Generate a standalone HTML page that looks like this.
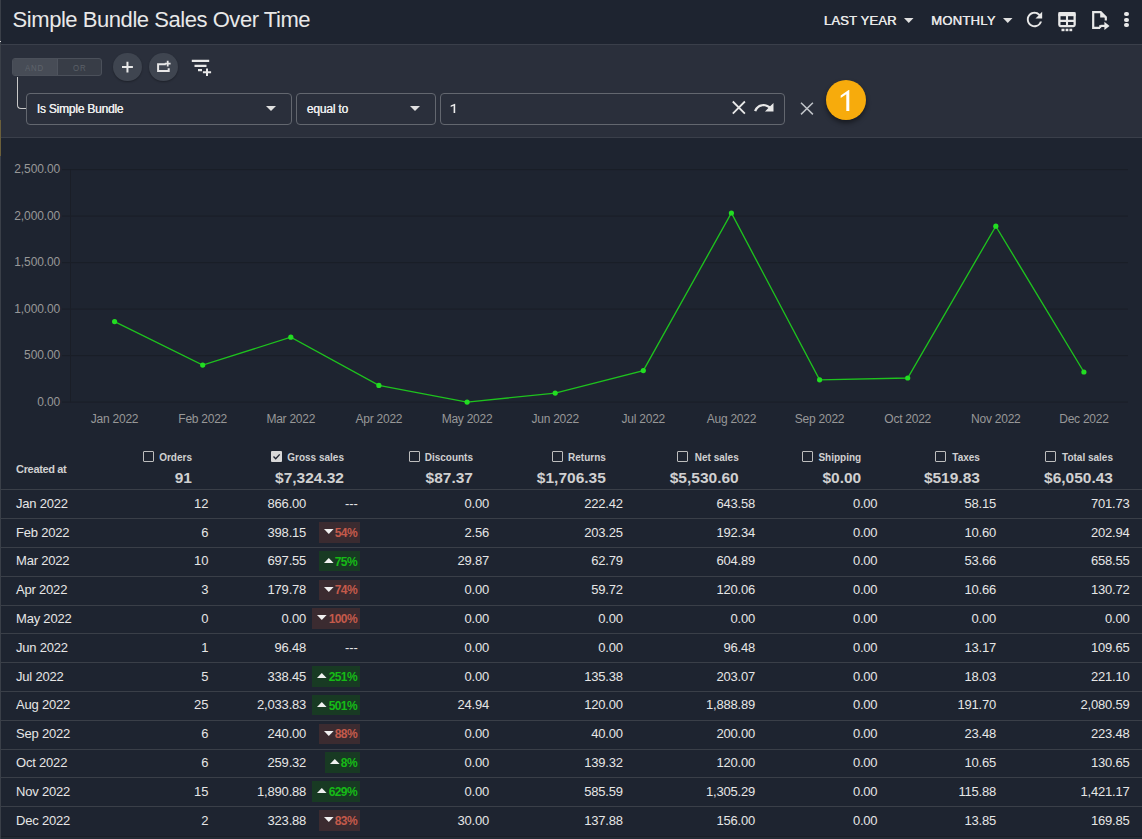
<!DOCTYPE html>
<html><head><meta charset="utf-8"><style>
html,body{margin:0;padding:0;width:1142px;height:839px;overflow:hidden;background:#1e2430}
body{position:relative;font-family:"Liberation Sans",sans-serif}
.t{position:absolute;white-space:nowrap}
</style></head><body>
<div style="position:absolute;left:0px;top:0px;width:1142px;height:44px;background:#1e2430"></div>
<div style="position:absolute;left:0px;top:44px;width:1142px;height:1px;background:#3a3f4a"></div>
<div style="position:absolute;left:0px;top:45px;width:1142px;height:92px;background:#2a2f3b"></div>
<div style="position:absolute;left:0px;top:137px;width:1142px;height:1px;background:#3a3f4a"></div>
<div style="position:absolute;left:0px;top:138px;width:1142px;height:701px;background:#1e2430"></div>
<div style="position:absolute;left:0px;top:0px;width:1px;height:839px;background:#3a3f48"></div>
<div style="position:absolute;left:0px;top:120px;width:1px;height:36px;background:#6b5f3a"></div>
<div style="position:absolute;left:0px;top:41px;width:1px;height:1px;background:#e0e0e0"></div>
<div class="t" style="top:5.50px;font-size:22px;line-height:28px;font-weight:400;color:#e8e8e8;letter-spacing:-0.45px;left:12.60px;">Simple Bundle Sales Over Time</div>
<div class="t" style="top:12.20px;font-size:13px;line-height:17px;font-weight:400;color:#e8e8e8;letter-spacing:0.2px;left:823.80px;text-shadow:0.4px 0 0 #e8e8e8;">LAST YEAR</div>
<div class="t" style="top:12.20px;font-size:13px;line-height:17px;font-weight:400;color:#e8e8e8;letter-spacing:0.3px;left:931.00px;text-shadow:0.4px 0 0 #e8e8e8;">MONTHLY</div>
<svg style="position:absolute;left:904px;top:18px" width="9.5" height="5" viewBox="0 0 9.5 5"><path d="M0 0H9.5L4.75 5Z" fill="#e0e0e0"/></svg>
<svg style="position:absolute;left:1003px;top:18px" width="9.5" height="5" viewBox="0 0 9.5 5"><path d="M0 0H9.5L4.75 5Z" fill="#e0e0e0"/></svg>
<svg style="position:absolute;left:1023px;top:8px" width="23" height="23" viewBox="0 0 24 24"><path fill="#e8e8e8" d="M17.65 6.35A7.958 7.958 0 0 0 12 4c-4.42 0-7.99 3.58-7.99 8s3.57 8 7.99 8c3.73 0 6.84-2.55 7.73-6h-2.08A5.99 5.99 0 0 1 12 18c-3.31 0-6-2.69-6-6s2.69-6 6-6c1.66 0 3.14.69 4.22 1.78L13 11h7V4l-2.35 2.35z"/></svg>
<svg style="position:absolute;left:0;top:0" width="1142" height="44"><rect x="1059.35" y="13.05" width="15.3" height="13" rx="1.2" fill="none" stroke="#e8e8e8" stroke-width="2.3"/><rect x="1058.5" y="12.2" width="17" height="4" fill="#e8e8e8"/><path d="M1067 16v9M1059 20.85h16" stroke="#e8e8e8" stroke-width="2.1"/><rect x="1061.5" y="28.7" width="3" height="2.5" fill="#e8e8e8"/><rect x="1065.6" y="28.7" width="2.8" height="2.5" fill="#e8e8e8"/><rect x="1069.4" y="28.7" width="2.8" height="2.5" fill="#e8e8e8"/><path d="M1100 27.9H1093.2V12.1H1100.7L1105.8 17.2V20.6" fill="none" stroke="#e8e8e8" stroke-width="2.2" stroke-linejoin="miter"/><path d="M1100.2 25.2V28.2" stroke="#e8e8e8" stroke-width="2"/><path d="M1100.2 12.6V17.5H1105.3Z" fill="#e8e8e8"/><path d="M1100.5 25.9H1105.5" stroke="#e8e8e8" stroke-width="2.2"/><path d="M1104.4 21.7L1109.5 25.9 1104.4 30.1Z" fill="#e8e8e8"/></svg>
<div style="position:absolute;left:1124.4px;top:12.0px;width:4.2px;height:4.2px;border-radius:50%;background:#e8e8e8"></div>
<div style="position:absolute;left:1124.4px;top:17.599999999999998px;width:4.2px;height:4.2px;border-radius:50%;background:#e8e8e8"></div>
<div style="position:absolute;left:1124.4px;top:23.2px;width:4.2px;height:4.2px;border-radius:50%;background:#e8e8e8"></div>
<div style="position:absolute;left:12px;top:58px;width:88px;height:16px;border:1px solid #4b505a;border-radius:3px;background:#383d47;overflow:hidden"><div style="position:absolute;left:0;top:0;width:43.6px;height:16px;background:#474c56;border-right:1px solid #4f545e"></div></div>
<div class="t" style="top:60.50px;font-size:9.8px;line-height:13px;font-weight:400;color:#5e636b;letter-spacing:1.0px;left:25.30px;transform:scaleX(0.8);transform-origin:0 0;">AND</div>
<div class="t" style="top:60.50px;font-size:9.8px;line-height:13px;font-weight:400;color:#5b6068;letter-spacing:1.0px;left:73.40px;transform:scaleX(0.8);transform-origin:0 0;">OR</div>
<div style="position:absolute;left:17px;top:77px;width:9px;height:31px;border-left:1px solid #c8c8c8;border-bottom:1px solid #c8c8c8;border-bottom-left-radius:4px"></div>
<div style="position:absolute;left:113.1px;top:52.7px;width:28.8px;height:28.8px;border-radius:50%;background:#3f4550;box-shadow:0 1px 2px rgba(0,0,0,.3)"></div>
<div style="position:absolute;left:149.0px;top:52.7px;width:28.8px;height:28.8px;border-radius:50%;background:#3f4550;box-shadow:0 1px 2px rgba(0,0,0,.3)"></div>
<svg style="position:absolute;left:0;top:44px" width="230" height="40" viewBox="0 44 230 40"><path d="M122 67.1H132.9M127.45 61.8V72.4" stroke="#e8e8e8" stroke-width="2"/><path d="M165.8 64.2H158.1V71H168.7V68.3" fill="none" stroke="#e8e8e8" stroke-width="2"/><path d="M164.8 63.6H170.6M167.7 60.8V66.4" stroke="#e8e8e8" stroke-width="1.8"/><path d="M191.8 60.9H209.2M194.5 65.8H206.5M198 70.1H202" stroke="#e8e8e8" stroke-width="2.2"/><path d="M202.9 72.25H211.1M207 68.5V76" stroke="#e8e8e8" stroke-width="2"/></svg>
<div style="position:absolute;left:26px;top:93px;width:264px;height:30px;border:1px solid #63676f;border-radius:4px"></div>
<div style="position:absolute;left:296px;top:93px;width:138px;height:30px;border:1px solid #63676f;border-radius:4px"></div>
<div style="position:absolute;left:440px;top:93px;width:343px;height:30px;border:1px solid #63676f;border-radius:4px"></div>
<div class="t" style="top:101.50px;font-size:12px;line-height:15px;font-weight:400;color:#ececec;letter-spacing:-0.22px;left:36.80px;text-shadow:0.2px 0 0 #ececec;">Is Simple Bundle</div>
<svg style="position:absolute;left:266px;top:106px" width="10" height="5" viewBox="0 0 10 5"><path d="M0 0H10L5.0 5Z" fill="#e0e0e0"/></svg>
<div class="t" style="top:102.00px;font-size:12px;line-height:15px;font-weight:400;color:#ececec;letter-spacing:-0.2px;left:306.80px;text-shadow:0.2px 0 0 #ececec;">equal to</div>
<svg style="position:absolute;left:410px;top:106px" width="10" height="5" viewBox="0 0 10 5"><path d="M0 0H10L5.0 5Z" fill="#e0e0e0"/></svg>
<svg style="position:absolute;left:440px;top:98px" width="30" height="20" viewBox="440 98 30 20"><path d="M455.2 103.8V112.9H453.6V105.7L450.7 106.9V105.5L454.9 103.8Z" fill="#ececec"/></svg>
<svg style="position:absolute;left:700px;top:90px" width="130" height="30" viewBox="700 90 130 30"><path d="M732.8 101.5L744.9 113.6M744.9 101.5L732.8 113.6" stroke="#e8e8e8" stroke-width="1.8"/><path transform="translate(752.6 96.3) scale(0.95)" fill="#e8e8e8" d="M18.4 10.6C16.55 8.99 14.15 8 11.5 8c-4.65 0-8.58 3.03-9.96 7.22L3.9 16c1.05-3.19 4.05-5.5 7.6-5.5 1.95 0 3.73.72 5.12 1.88L13 16h9V7l-3.6 3.6z"/><path d="M801 102.8L812.9 114.4M812.9 102.8L801 114.4" stroke="#bfc3c8" stroke-width="1.5"/></svg>
<div style="position:absolute;left:826px;top:79.8px;width:40px;height:40px;border-radius:50%;background:#f7ab0c;box-shadow:0 3px 5px rgba(0,0,0,.45)"></div>
<svg style="position:absolute;left:820px;top:80px" width="50" height="40" viewBox="820 80 50 40"><path d="M849.3 89.9V111H846.3V94.2L840.7 98.1V95.5L848.6 89.9Z" fill="#ffffff"/></svg>
<svg style="position:absolute;left:0;top:0" width="1142" height="839"><line x1="62" y1="402.1" x2="1128" y2="402.1" stroke="#1a1e27" stroke-width="1"/><line x1="62" y1="355.6" x2="1128" y2="355.6" stroke="#1a1e27" stroke-width="1"/><line x1="62" y1="309.1" x2="1128" y2="309.1" stroke="#1a1e27" stroke-width="1"/><line x1="62" y1="262.6" x2="1128" y2="262.6" stroke="#1a1e27" stroke-width="1"/><line x1="62" y1="216.1" x2="1128" y2="216.1" stroke="#1a1e27" stroke-width="1"/><line x1="62" y1="169.6" x2="1128" y2="169.6" stroke="#1a1e27" stroke-width="1"/><line x1="70.5" y1="169.6" x2="70.5" y2="402.1" stroke="#1a1e27" stroke-width="1"/><polyline fill="none" stroke="#1ec21e" stroke-width="1.35" points="114.6,321.6 202.7,365.1 290.8,337.2 378.9,385.4 467.1,402.1 555.2,393.1 643.3,370.6 731.4,213.0 819.6,379.8 907.7,378.0 995.8,226.2 1083.9,372.0"/><circle cx="114.6" cy="321.6" r="2.6" fill="#22dd22"/><circle cx="202.7" cy="365.1" r="2.6" fill="#22dd22"/><circle cx="290.8" cy="337.2" r="2.6" fill="#22dd22"/><circle cx="378.9" cy="385.4" r="2.6" fill="#22dd22"/><circle cx="467.1" cy="402.1" r="2.6" fill="#22dd22"/><circle cx="555.2" cy="393.1" r="2.6" fill="#22dd22"/><circle cx="643.3" cy="370.6" r="2.6" fill="#22dd22"/><circle cx="731.4" cy="213.0" r="2.6" fill="#22dd22"/><circle cx="819.6" cy="379.8" r="2.6" fill="#22dd22"/><circle cx="907.7" cy="378.0" r="2.6" fill="#22dd22"/><circle cx="995.8" cy="226.2" r="2.6" fill="#22dd22"/><circle cx="1083.9" cy="372.0" r="2.6" fill="#22dd22"/></svg>
<div class="t" style="top:394.80px;font-size:12px;line-height:15px;font-weight:400;color:#989898;letter-spacing:-0.1px;right:1081.80px;">0.00</div>
<div class="t" style="top:348.30px;font-size:12px;line-height:15px;font-weight:400;color:#989898;letter-spacing:-0.1px;right:1081.80px;">500.00</div>
<div class="t" style="top:301.80px;font-size:12px;line-height:15px;font-weight:400;color:#989898;letter-spacing:-0.1px;right:1081.80px;">1,000.00</div>
<div class="t" style="top:255.30px;font-size:12px;line-height:15px;font-weight:400;color:#989898;letter-spacing:-0.1px;right:1081.80px;">1,500.00</div>
<div class="t" style="top:208.80px;font-size:12px;line-height:15px;font-weight:400;color:#989898;letter-spacing:-0.1px;right:1081.80px;">2,000.00</div>
<div class="t" style="top:162.30px;font-size:12px;line-height:15px;font-weight:400;color:#989898;letter-spacing:-0.1px;right:1081.80px;">2,500.00</div>
<div class="t" style="top:411.50px;font-size:12px;line-height:15px;font-weight:400;color:#989898;letter-spacing:-0.25px;left:114.56px;transform:translateX(-50%);">Jan 2022</div>
<div class="t" style="top:411.50px;font-size:12px;line-height:15px;font-weight:400;color:#989898;letter-spacing:-0.25px;left:202.69px;transform:translateX(-50%);">Feb 2022</div>
<div class="t" style="top:411.50px;font-size:12px;line-height:15px;font-weight:400;color:#989898;letter-spacing:-0.25px;left:290.81px;transform:translateX(-50%);">Mar 2022</div>
<div class="t" style="top:411.50px;font-size:12px;line-height:15px;font-weight:400;color:#989898;letter-spacing:-0.25px;left:378.94px;transform:translateX(-50%);">Apr 2022</div>
<div class="t" style="top:411.50px;font-size:12px;line-height:15px;font-weight:400;color:#989898;letter-spacing:-0.25px;left:467.06px;transform:translateX(-50%);">May 2022</div>
<div class="t" style="top:411.50px;font-size:12px;line-height:15px;font-weight:400;color:#989898;letter-spacing:-0.25px;left:555.19px;transform:translateX(-50%);">Jun 2022</div>
<div class="t" style="top:411.50px;font-size:12px;line-height:15px;font-weight:400;color:#989898;letter-spacing:-0.25px;left:643.31px;transform:translateX(-50%);">Jul 2022</div>
<div class="t" style="top:411.50px;font-size:12px;line-height:15px;font-weight:400;color:#989898;letter-spacing:-0.25px;left:731.44px;transform:translateX(-50%);">Aug 2022</div>
<div class="t" style="top:411.50px;font-size:12px;line-height:15px;font-weight:400;color:#989898;letter-spacing:-0.25px;left:819.56px;transform:translateX(-50%);">Sep 2022</div>
<div class="t" style="top:411.50px;font-size:12px;line-height:15px;font-weight:400;color:#989898;letter-spacing:-0.25px;left:907.69px;transform:translateX(-50%);">Oct 2022</div>
<div class="t" style="top:411.50px;font-size:12px;line-height:15px;font-weight:400;color:#989898;letter-spacing:-0.25px;left:995.81px;transform:translateX(-50%);">Nov 2022</div>
<div class="t" style="top:411.50px;font-size:12px;line-height:15px;font-weight:400;color:#989898;letter-spacing:-0.25px;left:1083.94px;transform:translateX(-50%);">Dec 2022</div>
<div class="t" style="top:461.90px;font-size:11px;line-height:14px;font-weight:700;color:#d0d0d0;letter-spacing:-0.35px;left:16.10px;">Created at</div>
<div class="t" style="top:451.00px;font-size:10px;line-height:13px;font-weight:700;color:#d0d0d0;right:950.00px;">Orders</div>
<div class="t" style="top:467.50px;font-size:15.5px;line-height:20px;font-weight:700;color:#d0d0d0;right:950.00px;">91</div>
<div class="t" style="top:451.00px;font-size:10px;line-height:13px;font-weight:700;color:#d0d0d0;right:798.00px;">Gross sales</div>
<div class="t" style="top:467.50px;font-size:15.5px;line-height:20px;font-weight:700;color:#d0d0d0;right:798.00px;">$7,324.32</div>
<div class="t" style="top:451.00px;font-size:10px;line-height:13px;font-weight:700;color:#d0d0d0;right:669.00px;">Discounts</div>
<div class="t" style="top:467.50px;font-size:15.5px;line-height:20px;font-weight:700;color:#d0d0d0;right:669.00px;">$87.37</div>
<div class="t" style="top:451.00px;font-size:10px;line-height:13px;font-weight:700;color:#d0d0d0;right:536.20px;">Returns</div>
<div class="t" style="top:467.50px;font-size:15.5px;line-height:20px;font-weight:700;color:#d0d0d0;right:536.20px;">$1,706.35</div>
<div class="t" style="top:451.00px;font-size:10px;line-height:13px;font-weight:700;color:#d0d0d0;right:403.30px;">Net sales</div>
<div class="t" style="top:467.50px;font-size:15.5px;line-height:20px;font-weight:700;color:#d0d0d0;right:403.30px;">$5,530.60</div>
<div class="t" style="top:451.00px;font-size:10px;line-height:13px;font-weight:700;color:#d0d0d0;right:280.80px;">Shipping</div>
<div class="t" style="top:467.50px;font-size:15.5px;line-height:20px;font-weight:700;color:#d0d0d0;right:280.80px;">$0.00</div>
<div class="t" style="top:451.00px;font-size:10px;line-height:13px;font-weight:700;color:#d0d0d0;right:162.10px;">Taxes</div>
<div class="t" style="top:467.50px;font-size:15.5px;line-height:20px;font-weight:700;color:#d0d0d0;right:162.10px;">$519.83</div>
<div class="t" style="top:451.00px;font-size:10px;line-height:13px;font-weight:700;color:#d0d0d0;right:29.00px;">Total sales</div>
<div class="t" style="top:467.50px;font-size:15.5px;line-height:20px;font-weight:700;color:#d0d0d0;right:29.00px;">$6,050.43</div>
<div style="position:absolute;left:143.2px;top:450.9px;width:9px;height:9px;border:1px solid #bdbdbd;border-radius:1px"></div>
<div style="position:absolute;left:270.8px;top:450.9px;width:11px;height:11px;background:#d8d8d8;border-radius:1px"></div>
<svg style="position:absolute;left:271.8px;top:451.9px" width="9" height="9" viewBox="0 0 9 9"><path d="M1.5 4.6l2.2 2.2 4-4.4" fill="none" stroke="#1f2430" stroke-width="1.4"/></svg>
<div style="position:absolute;left:408.5px;top:450.9px;width:9px;height:9px;border:1px solid #bdbdbd;border-radius:1px"></div>
<div style="position:absolute;left:551.8px;top:450.9px;width:9px;height:9px;border:1px solid #bdbdbd;border-radius:1px"></div>
<div style="position:absolute;left:677.3px;top:450.9px;width:9px;height:9px;border:1px solid #bdbdbd;border-radius:1px"></div>
<div style="position:absolute;left:802.4px;top:450.9px;width:9px;height:9px;border:1px solid #bdbdbd;border-radius:1px"></div>
<div style="position:absolute;left:935px;top:450.9px;width:9px;height:9px;border:1px solid #bdbdbd;border-radius:1px"></div>
<div style="position:absolute;left:1045.2px;top:450.9px;width:9px;height:9px;border:1px solid #bdbdbd;border-radius:1px"></div>
<div style="position:absolute;left:1px;top:489px;width:1141px;height:1px;background:#3a3f48"></div>
<div style="position:absolute;left:1px;top:518px;width:1141px;height:1px;background:#3a3f48"></div>
<div class="t" style="top:494.80px;font-size:13px;line-height:17px;font-weight:400;color:#e6e6e6;letter-spacing:-0.2px;left:16.00px;">Jan 2022</div>
<div class="t" style="top:494.80px;font-size:13px;line-height:17px;font-weight:400;color:#e6e6e6;right:933.50px;">12</div>
<div class="t" style="top:494.80px;font-size:13px;line-height:17px;font-weight:400;color:#e6e6e6;letter-spacing:-0.2px;right:835.90px;">866.00</div>
<div class="t" style="top:494.80px;font-size:13px;line-height:17px;font-weight:400;color:#e6e6e6;letter-spacing:-0.1px;right:784.40px;">---</div>
<div class="t" style="top:494.80px;font-size:13px;line-height:17px;font-weight:400;color:#e6e6e6;letter-spacing:-0.2px;right:653.00px;">0.00</div>
<div class="t" style="top:494.80px;font-size:13px;line-height:17px;font-weight:400;color:#e6e6e6;letter-spacing:-0.2px;right:519.30px;">222.42</div>
<div class="t" style="top:494.80px;font-size:13px;line-height:17px;font-weight:400;color:#e6e6e6;letter-spacing:-0.2px;right:387.00px;">643.58</div>
<div class="t" style="top:494.80px;font-size:13px;line-height:17px;font-weight:400;color:#e6e6e6;letter-spacing:-0.2px;right:264.60px;">0.00</div>
<div class="t" style="top:494.80px;font-size:13px;line-height:17px;font-weight:400;color:#e6e6e6;letter-spacing:-0.2px;right:146.00px;">58.15</div>
<div class="t" style="top:494.80px;font-size:13px;line-height:17px;font-weight:400;color:#e6e6e6;letter-spacing:-0.2px;right:12.50px;">701.73</div>
<div style="position:absolute;left:1px;top:547px;width:1141px;height:1px;background:#3a3f48"></div>
<div class="t" style="top:523.60px;font-size:13px;line-height:17px;font-weight:400;color:#e6e6e6;letter-spacing:-0.2px;left:16.00px;">Feb 2022</div>
<div class="t" style="top:523.60px;font-size:13px;line-height:17px;font-weight:400;color:#e6e6e6;right:933.50px;">6</div>
<div class="t" style="top:523.60px;font-size:13px;line-height:17px;font-weight:400;color:#e6e6e6;letter-spacing:-0.2px;right:835.90px;">398.15</div>
<div style="position:absolute;left:319.2px;top:521.90px;width:40.6px;height:20.8px;background:#3b2b30"></div>
<div class="t" style="top:525.85px;font-size:12px;line-height:15px;font-weight:700;color:#c45a4b;letter-spacing:-0.65px;right:785.10px;">54%</div>
<svg style="position:absolute;left:323.8px;top:529.00px" width="10" height="5"><path d="M0 0H9.6L4.8 5Z" fill="#f0f0f0"/></svg>
<div class="t" style="top:523.60px;font-size:13px;line-height:17px;font-weight:400;color:#e6e6e6;letter-spacing:-0.2px;right:653.00px;">2.56</div>
<div class="t" style="top:523.60px;font-size:13px;line-height:17px;font-weight:400;color:#e6e6e6;letter-spacing:-0.2px;right:519.30px;">203.25</div>
<div class="t" style="top:523.60px;font-size:13px;line-height:17px;font-weight:400;color:#e6e6e6;letter-spacing:-0.2px;right:387.00px;">192.34</div>
<div class="t" style="top:523.60px;font-size:13px;line-height:17px;font-weight:400;color:#e6e6e6;letter-spacing:-0.2px;right:264.60px;">0.00</div>
<div class="t" style="top:523.60px;font-size:13px;line-height:17px;font-weight:400;color:#e6e6e6;letter-spacing:-0.2px;right:146.00px;">10.60</div>
<div class="t" style="top:523.60px;font-size:13px;line-height:17px;font-weight:400;color:#e6e6e6;letter-spacing:-0.2px;right:12.50px;">202.94</div>
<div style="position:absolute;left:1px;top:576px;width:1141px;height:1px;background:#3a3f48"></div>
<div class="t" style="top:552.40px;font-size:13px;line-height:17px;font-weight:400;color:#e6e6e6;letter-spacing:-0.2px;left:16.00px;">Mar 2022</div>
<div class="t" style="top:552.40px;font-size:13px;line-height:17px;font-weight:400;color:#e6e6e6;right:933.50px;">10</div>
<div class="t" style="top:552.40px;font-size:13px;line-height:17px;font-weight:400;color:#e6e6e6;letter-spacing:-0.2px;right:835.90px;">697.55</div>
<div style="position:absolute;left:319.2px;top:550.70px;width:40.6px;height:20.8px;background:#183a23"></div>
<div class="t" style="top:554.65px;font-size:12px;line-height:15px;font-weight:700;color:#16ba16;letter-spacing:-0.65px;right:785.10px;">75%</div>
<svg style="position:absolute;left:323.8px;top:557.80px" width="10" height="5"><path d="M0 5H9.6L4.8 0Z" fill="#f0f0f0"/></svg>
<div class="t" style="top:552.40px;font-size:13px;line-height:17px;font-weight:400;color:#e6e6e6;letter-spacing:-0.2px;right:653.00px;">29.87</div>
<div class="t" style="top:552.40px;font-size:13px;line-height:17px;font-weight:400;color:#e6e6e6;letter-spacing:-0.2px;right:519.30px;">62.79</div>
<div class="t" style="top:552.40px;font-size:13px;line-height:17px;font-weight:400;color:#e6e6e6;letter-spacing:-0.2px;right:387.00px;">604.89</div>
<div class="t" style="top:552.40px;font-size:13px;line-height:17px;font-weight:400;color:#e6e6e6;letter-spacing:-0.2px;right:264.60px;">0.00</div>
<div class="t" style="top:552.40px;font-size:13px;line-height:17px;font-weight:400;color:#e6e6e6;letter-spacing:-0.2px;right:146.00px;">53.66</div>
<div class="t" style="top:552.40px;font-size:13px;line-height:17px;font-weight:400;color:#e6e6e6;letter-spacing:-0.2px;right:12.50px;">658.55</div>
<div style="position:absolute;left:1px;top:605px;width:1141px;height:1px;background:#3a3f48"></div>
<div class="t" style="top:581.20px;font-size:13px;line-height:17px;font-weight:400;color:#e6e6e6;letter-spacing:-0.2px;left:16.00px;">Apr 2022</div>
<div class="t" style="top:581.20px;font-size:13px;line-height:17px;font-weight:400;color:#e6e6e6;right:933.50px;">3</div>
<div class="t" style="top:581.20px;font-size:13px;line-height:17px;font-weight:400;color:#e6e6e6;letter-spacing:-0.2px;right:835.90px;">179.78</div>
<div style="position:absolute;left:319.2px;top:579.50px;width:40.6px;height:20.8px;background:#3b2b30"></div>
<div class="t" style="top:583.45px;font-size:12px;line-height:15px;font-weight:700;color:#c45a4b;letter-spacing:-0.65px;right:785.10px;">74%</div>
<svg style="position:absolute;left:323.8px;top:586.60px" width="10" height="5"><path d="M0 0H9.6L4.8 5Z" fill="#f0f0f0"/></svg>
<div class="t" style="top:581.20px;font-size:13px;line-height:17px;font-weight:400;color:#e6e6e6;letter-spacing:-0.2px;right:653.00px;">0.00</div>
<div class="t" style="top:581.20px;font-size:13px;line-height:17px;font-weight:400;color:#e6e6e6;letter-spacing:-0.2px;right:519.30px;">59.72</div>
<div class="t" style="top:581.20px;font-size:13px;line-height:17px;font-weight:400;color:#e6e6e6;letter-spacing:-0.2px;right:387.00px;">120.06</div>
<div class="t" style="top:581.20px;font-size:13px;line-height:17px;font-weight:400;color:#e6e6e6;letter-spacing:-0.2px;right:264.60px;">0.00</div>
<div class="t" style="top:581.20px;font-size:13px;line-height:17px;font-weight:400;color:#e6e6e6;letter-spacing:-0.2px;right:146.00px;">10.66</div>
<div class="t" style="top:581.20px;font-size:13px;line-height:17px;font-weight:400;color:#e6e6e6;letter-spacing:-0.2px;right:12.50px;">130.72</div>
<div style="position:absolute;left:1px;top:633px;width:1141px;height:1px;background:#3a3f48"></div>
<div class="t" style="top:610.00px;font-size:13px;line-height:17px;font-weight:400;color:#e6e6e6;letter-spacing:-0.2px;left:16.00px;">May 2022</div>
<div class="t" style="top:610.00px;font-size:13px;line-height:17px;font-weight:400;color:#e6e6e6;right:933.50px;">0</div>
<div class="t" style="top:610.00px;font-size:13px;line-height:17px;font-weight:400;color:#e6e6e6;letter-spacing:-0.2px;right:835.90px;">0.00</div>
<div style="position:absolute;left:312.1px;top:608.30px;width:47.7px;height:20.8px;background:#3b2b30"></div>
<div class="t" style="top:612.25px;font-size:12px;line-height:15px;font-weight:700;color:#c45a4b;letter-spacing:-0.65px;right:785.10px;">100%</div>
<svg style="position:absolute;left:316.7px;top:615.40px" width="10" height="5"><path d="M0 0H9.6L4.8 5Z" fill="#f0f0f0"/></svg>
<div class="t" style="top:610.00px;font-size:13px;line-height:17px;font-weight:400;color:#e6e6e6;letter-spacing:-0.2px;right:653.00px;">0.00</div>
<div class="t" style="top:610.00px;font-size:13px;line-height:17px;font-weight:400;color:#e6e6e6;letter-spacing:-0.2px;right:519.30px;">0.00</div>
<div class="t" style="top:610.00px;font-size:13px;line-height:17px;font-weight:400;color:#e6e6e6;letter-spacing:-0.2px;right:387.00px;">0.00</div>
<div class="t" style="top:610.00px;font-size:13px;line-height:17px;font-weight:400;color:#e6e6e6;letter-spacing:-0.2px;right:264.60px;">0.00</div>
<div class="t" style="top:610.00px;font-size:13px;line-height:17px;font-weight:400;color:#e6e6e6;letter-spacing:-0.2px;right:146.00px;">0.00</div>
<div class="t" style="top:610.00px;font-size:13px;line-height:17px;font-weight:400;color:#e6e6e6;letter-spacing:-0.2px;right:12.50px;">0.00</div>
<div style="position:absolute;left:1px;top:662px;width:1141px;height:1px;background:#3a3f48"></div>
<div class="t" style="top:638.80px;font-size:13px;line-height:17px;font-weight:400;color:#e6e6e6;letter-spacing:-0.2px;left:16.00px;">Jun 2022</div>
<div class="t" style="top:638.80px;font-size:13px;line-height:17px;font-weight:400;color:#e6e6e6;right:933.50px;">1</div>
<div class="t" style="top:638.80px;font-size:13px;line-height:17px;font-weight:400;color:#e6e6e6;letter-spacing:-0.2px;right:835.90px;">96.48</div>
<div class="t" style="top:638.80px;font-size:13px;line-height:17px;font-weight:400;color:#e6e6e6;letter-spacing:-0.1px;right:784.40px;">---</div>
<div class="t" style="top:638.80px;font-size:13px;line-height:17px;font-weight:400;color:#e6e6e6;letter-spacing:-0.2px;right:653.00px;">0.00</div>
<div class="t" style="top:638.80px;font-size:13px;line-height:17px;font-weight:400;color:#e6e6e6;letter-spacing:-0.2px;right:519.30px;">0.00</div>
<div class="t" style="top:638.80px;font-size:13px;line-height:17px;font-weight:400;color:#e6e6e6;letter-spacing:-0.2px;right:387.00px;">96.48</div>
<div class="t" style="top:638.80px;font-size:13px;line-height:17px;font-weight:400;color:#e6e6e6;letter-spacing:-0.2px;right:264.60px;">0.00</div>
<div class="t" style="top:638.80px;font-size:13px;line-height:17px;font-weight:400;color:#e6e6e6;letter-spacing:-0.2px;right:146.00px;">13.17</div>
<div class="t" style="top:638.80px;font-size:13px;line-height:17px;font-weight:400;color:#e6e6e6;letter-spacing:-0.2px;right:12.50px;">109.65</div>
<div style="position:absolute;left:1px;top:691px;width:1141px;height:1px;background:#3a3f48"></div>
<div class="t" style="top:667.60px;font-size:13px;line-height:17px;font-weight:400;color:#e6e6e6;letter-spacing:-0.2px;left:16.00px;">Jul 2022</div>
<div class="t" style="top:667.60px;font-size:13px;line-height:17px;font-weight:400;color:#e6e6e6;right:933.50px;">5</div>
<div class="t" style="top:667.60px;font-size:13px;line-height:17px;font-weight:400;color:#e6e6e6;letter-spacing:-0.2px;right:835.90px;">338.45</div>
<div style="position:absolute;left:312.1px;top:665.90px;width:47.7px;height:20.8px;background:#183a23"></div>
<div class="t" style="top:669.85px;font-size:12px;line-height:15px;font-weight:700;color:#16ba16;letter-spacing:-0.65px;right:785.10px;">251%</div>
<svg style="position:absolute;left:316.7px;top:673.00px" width="10" height="5"><path d="M0 5H9.6L4.8 0Z" fill="#f0f0f0"/></svg>
<div class="t" style="top:667.60px;font-size:13px;line-height:17px;font-weight:400;color:#e6e6e6;letter-spacing:-0.2px;right:653.00px;">0.00</div>
<div class="t" style="top:667.60px;font-size:13px;line-height:17px;font-weight:400;color:#e6e6e6;letter-spacing:-0.2px;right:519.30px;">135.38</div>
<div class="t" style="top:667.60px;font-size:13px;line-height:17px;font-weight:400;color:#e6e6e6;letter-spacing:-0.2px;right:387.00px;">203.07</div>
<div class="t" style="top:667.60px;font-size:13px;line-height:17px;font-weight:400;color:#e6e6e6;letter-spacing:-0.2px;right:264.60px;">0.00</div>
<div class="t" style="top:667.60px;font-size:13px;line-height:17px;font-weight:400;color:#e6e6e6;letter-spacing:-0.2px;right:146.00px;">18.03</div>
<div class="t" style="top:667.60px;font-size:13px;line-height:17px;font-weight:400;color:#e6e6e6;letter-spacing:-0.2px;right:12.50px;">221.10</div>
<div style="position:absolute;left:1px;top:720px;width:1141px;height:1px;background:#3a3f48"></div>
<div class="t" style="top:696.40px;font-size:13px;line-height:17px;font-weight:400;color:#e6e6e6;letter-spacing:-0.2px;left:16.00px;">Aug 2022</div>
<div class="t" style="top:696.40px;font-size:13px;line-height:17px;font-weight:400;color:#e6e6e6;right:933.50px;">25</div>
<div class="t" style="top:696.40px;font-size:13px;line-height:17px;font-weight:400;color:#e6e6e6;letter-spacing:-0.2px;right:835.90px;">2,033.83</div>
<div style="position:absolute;left:312.1px;top:694.70px;width:47.7px;height:20.8px;background:#183a23"></div>
<div class="t" style="top:698.65px;font-size:12px;line-height:15px;font-weight:700;color:#16ba16;letter-spacing:-0.65px;right:785.10px;">501%</div>
<svg style="position:absolute;left:316.7px;top:701.80px" width="10" height="5"><path d="M0 5H9.6L4.8 0Z" fill="#f0f0f0"/></svg>
<div class="t" style="top:696.40px;font-size:13px;line-height:17px;font-weight:400;color:#e6e6e6;letter-spacing:-0.2px;right:653.00px;">24.94</div>
<div class="t" style="top:696.40px;font-size:13px;line-height:17px;font-weight:400;color:#e6e6e6;letter-spacing:-0.2px;right:519.30px;">120.00</div>
<div class="t" style="top:696.40px;font-size:13px;line-height:17px;font-weight:400;color:#e6e6e6;letter-spacing:-0.2px;right:387.00px;">1,888.89</div>
<div class="t" style="top:696.40px;font-size:13px;line-height:17px;font-weight:400;color:#e6e6e6;letter-spacing:-0.2px;right:264.60px;">0.00</div>
<div class="t" style="top:696.40px;font-size:13px;line-height:17px;font-weight:400;color:#e6e6e6;letter-spacing:-0.2px;right:146.00px;">191.70</div>
<div class="t" style="top:696.40px;font-size:13px;line-height:17px;font-weight:400;color:#e6e6e6;letter-spacing:-0.2px;right:12.50px;">2,080.59</div>
<div style="position:absolute;left:1px;top:749px;width:1141px;height:1px;background:#3a3f48"></div>
<div class="t" style="top:725.20px;font-size:13px;line-height:17px;font-weight:400;color:#e6e6e6;letter-spacing:-0.2px;left:16.00px;">Sep 2022</div>
<div class="t" style="top:725.20px;font-size:13px;line-height:17px;font-weight:400;color:#e6e6e6;right:933.50px;">6</div>
<div class="t" style="top:725.20px;font-size:13px;line-height:17px;font-weight:400;color:#e6e6e6;letter-spacing:-0.2px;right:835.90px;">240.00</div>
<div style="position:absolute;left:319.2px;top:723.50px;width:40.6px;height:20.8px;background:#3b2b30"></div>
<div class="t" style="top:727.45px;font-size:12px;line-height:15px;font-weight:700;color:#c45a4b;letter-spacing:-0.65px;right:785.10px;">88%</div>
<svg style="position:absolute;left:323.8px;top:730.60px" width="10" height="5"><path d="M0 0H9.6L4.8 5Z" fill="#f0f0f0"/></svg>
<div class="t" style="top:725.20px;font-size:13px;line-height:17px;font-weight:400;color:#e6e6e6;letter-spacing:-0.2px;right:653.00px;">0.00</div>
<div class="t" style="top:725.20px;font-size:13px;line-height:17px;font-weight:400;color:#e6e6e6;letter-spacing:-0.2px;right:519.30px;">40.00</div>
<div class="t" style="top:725.20px;font-size:13px;line-height:17px;font-weight:400;color:#e6e6e6;letter-spacing:-0.2px;right:387.00px;">200.00</div>
<div class="t" style="top:725.20px;font-size:13px;line-height:17px;font-weight:400;color:#e6e6e6;letter-spacing:-0.2px;right:264.60px;">0.00</div>
<div class="t" style="top:725.20px;font-size:13px;line-height:17px;font-weight:400;color:#e6e6e6;letter-spacing:-0.2px;right:146.00px;">23.48</div>
<div class="t" style="top:725.20px;font-size:13px;line-height:17px;font-weight:400;color:#e6e6e6;letter-spacing:-0.2px;right:12.50px;">223.48</div>
<div style="position:absolute;left:1px;top:777px;width:1141px;height:1px;background:#3a3f48"></div>
<div class="t" style="top:754.00px;font-size:13px;line-height:17px;font-weight:400;color:#e6e6e6;letter-spacing:-0.2px;left:16.00px;">Oct 2022</div>
<div class="t" style="top:754.00px;font-size:13px;line-height:17px;font-weight:400;color:#e6e6e6;right:933.50px;">6</div>
<div class="t" style="top:754.00px;font-size:13px;line-height:17px;font-weight:400;color:#e6e6e6;letter-spacing:-0.2px;right:835.90px;">259.32</div>
<div style="position:absolute;left:325.1px;top:752.30px;width:34.7px;height:20.8px;background:#183a23"></div>
<div class="t" style="top:756.25px;font-size:12px;line-height:15px;font-weight:700;color:#16ba16;letter-spacing:-0.65px;right:785.10px;">8%</div>
<svg style="position:absolute;left:329.7px;top:759.40px" width="10" height="5"><path d="M0 5H9.6L4.8 0Z" fill="#f0f0f0"/></svg>
<div class="t" style="top:754.00px;font-size:13px;line-height:17px;font-weight:400;color:#e6e6e6;letter-spacing:-0.2px;right:653.00px;">0.00</div>
<div class="t" style="top:754.00px;font-size:13px;line-height:17px;font-weight:400;color:#e6e6e6;letter-spacing:-0.2px;right:519.30px;">139.32</div>
<div class="t" style="top:754.00px;font-size:13px;line-height:17px;font-weight:400;color:#e6e6e6;letter-spacing:-0.2px;right:387.00px;">120.00</div>
<div class="t" style="top:754.00px;font-size:13px;line-height:17px;font-weight:400;color:#e6e6e6;letter-spacing:-0.2px;right:264.60px;">0.00</div>
<div class="t" style="top:754.00px;font-size:13px;line-height:17px;font-weight:400;color:#e6e6e6;letter-spacing:-0.2px;right:146.00px;">10.65</div>
<div class="t" style="top:754.00px;font-size:13px;line-height:17px;font-weight:400;color:#e6e6e6;letter-spacing:-0.2px;right:12.50px;">130.65</div>
<div style="position:absolute;left:1px;top:806px;width:1141px;height:1px;background:#3a3f48"></div>
<div class="t" style="top:782.80px;font-size:13px;line-height:17px;font-weight:400;color:#e6e6e6;letter-spacing:-0.2px;left:16.00px;">Nov 2022</div>
<div class="t" style="top:782.80px;font-size:13px;line-height:17px;font-weight:400;color:#e6e6e6;right:933.50px;">15</div>
<div class="t" style="top:782.80px;font-size:13px;line-height:17px;font-weight:400;color:#e6e6e6;letter-spacing:-0.2px;right:835.90px;">1,890.88</div>
<div style="position:absolute;left:312.1px;top:781.10px;width:47.7px;height:20.8px;background:#183a23"></div>
<div class="t" style="top:785.05px;font-size:12px;line-height:15px;font-weight:700;color:#16ba16;letter-spacing:-0.65px;right:785.10px;">629%</div>
<svg style="position:absolute;left:316.7px;top:788.20px" width="10" height="5"><path d="M0 5H9.6L4.8 0Z" fill="#f0f0f0"/></svg>
<div class="t" style="top:782.80px;font-size:13px;line-height:17px;font-weight:400;color:#e6e6e6;letter-spacing:-0.2px;right:653.00px;">0.00</div>
<div class="t" style="top:782.80px;font-size:13px;line-height:17px;font-weight:400;color:#e6e6e6;letter-spacing:-0.2px;right:519.30px;">585.59</div>
<div class="t" style="top:782.80px;font-size:13px;line-height:17px;font-weight:400;color:#e6e6e6;letter-spacing:-0.2px;right:387.00px;">1,305.29</div>
<div class="t" style="top:782.80px;font-size:13px;line-height:17px;font-weight:400;color:#e6e6e6;letter-spacing:-0.2px;right:264.60px;">0.00</div>
<div class="t" style="top:782.80px;font-size:13px;line-height:17px;font-weight:400;color:#e6e6e6;letter-spacing:-0.2px;right:146.00px;">115.88</div>
<div class="t" style="top:782.80px;font-size:13px;line-height:17px;font-weight:400;color:#e6e6e6;letter-spacing:-0.2px;right:12.50px;">1,421.17</div>
<div class="t" style="top:811.60px;font-size:13px;line-height:17px;font-weight:400;color:#e6e6e6;letter-spacing:-0.2px;left:16.00px;">Dec 2022</div>
<div class="t" style="top:811.60px;font-size:13px;line-height:17px;font-weight:400;color:#e6e6e6;right:933.50px;">2</div>
<div class="t" style="top:811.60px;font-size:13px;line-height:17px;font-weight:400;color:#e6e6e6;letter-spacing:-0.2px;right:835.90px;">323.88</div>
<div style="position:absolute;left:319.2px;top:809.90px;width:40.6px;height:20.8px;background:#3b2b30"></div>
<div class="t" style="top:813.85px;font-size:12px;line-height:15px;font-weight:700;color:#c45a4b;letter-spacing:-0.65px;right:785.10px;">83%</div>
<svg style="position:absolute;left:323.8px;top:817.00px" width="10" height="5"><path d="M0 0H9.6L4.8 5Z" fill="#f0f0f0"/></svg>
<div class="t" style="top:811.60px;font-size:13px;line-height:17px;font-weight:400;color:#e6e6e6;letter-spacing:-0.2px;right:653.00px;">30.00</div>
<div class="t" style="top:811.60px;font-size:13px;line-height:17px;font-weight:400;color:#e6e6e6;letter-spacing:-0.2px;right:519.30px;">137.88</div>
<div class="t" style="top:811.60px;font-size:13px;line-height:17px;font-weight:400;color:#e6e6e6;letter-spacing:-0.2px;right:387.00px;">156.00</div>
<div class="t" style="top:811.60px;font-size:13px;line-height:17px;font-weight:400;color:#e6e6e6;letter-spacing:-0.2px;right:264.60px;">0.00</div>
<div class="t" style="top:811.60px;font-size:13px;line-height:17px;font-weight:400;color:#e6e6e6;letter-spacing:-0.2px;right:146.00px;">13.85</div>
<div class="t" style="top:811.60px;font-size:13px;line-height:17px;font-weight:400;color:#e6e6e6;letter-spacing:-0.2px;right:12.50px;">169.85</div>
<div style="position:absolute;left:1px;top:836px;width:1141px;height:1px;background:#1b1f27"></div>
<div style="position:absolute;left:1px;top:837px;width:1141px;height:2px;background:#232a34"></div>
</body></html>
